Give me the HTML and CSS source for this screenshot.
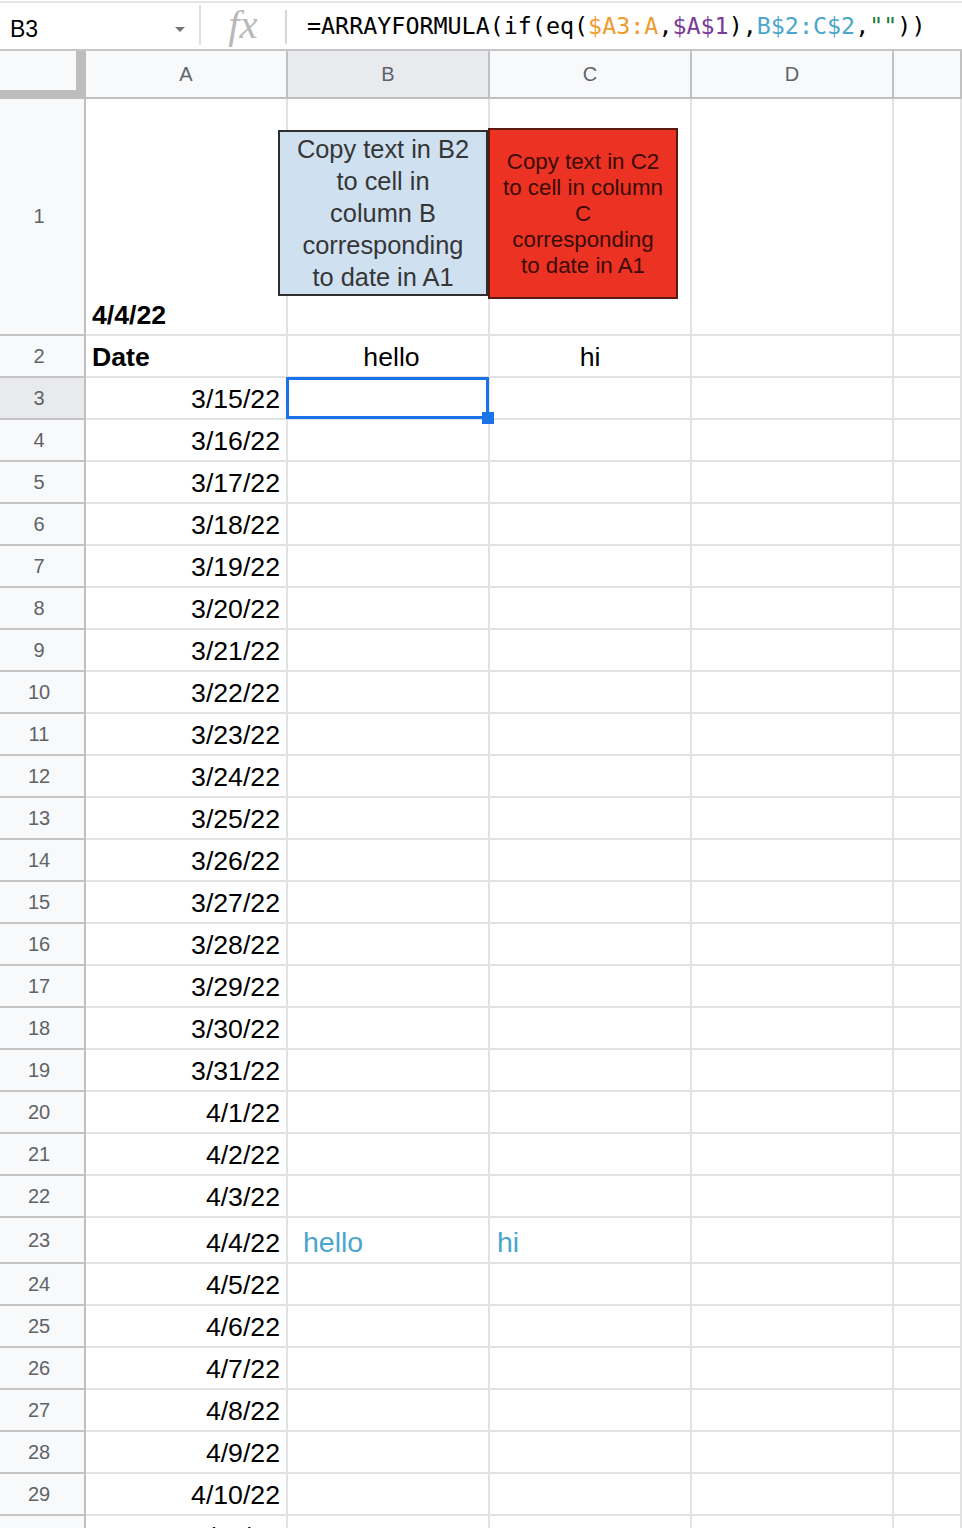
FILE: index.html
```html
<!DOCTYPE html>
<html>
<head>
<meta charset="utf-8">
<title>Sheet</title>
<link rel="stylesheet" href="styles.css">
</head>
<body>
<div class="page">
  <div class="topbar">
    <div class="namebox"><span class="ref">B3</span><span class="caret"></span></div>
    <div class="divider d1"></div>
    <div class="fx">fx</div>
    <div class="divider d2"></div>
    <div class="formula">=ARRAYFORMULA(if(eq(<span class="r1">$A3:A</span>,<span class="r2">$A$1</span>),<span class="r3">B$2:C$2</span>,<span class="str">""</span>))</div>
  </div>

  <div class="sheet">
    <div class="hrow">
      <div class="corner"><div class="corner-in"></div></div>
      <div class="ch">A</div>
      <div class="ch sel">B</div>
      <div class="ch">C</div>
      <div class="ch">D</div>
      <div class="ch"></div>
    </div>

    <div class="row r-first">
      <div class="rh">1</div><div class="c bold">4/4/22</div><div class="c"></div><div class="c"></div><div class="c"></div><div class="c"></div>
    </div>
    <div class="row">
      <div class="rh">2</div><div class="c bold">Date</div><div class="c center center-b">hello</div><div class="c center">hi</div><div class="c"></div><div class="c"></div>
    </div>
    <div class="row">
      <div class="rh sel">3</div><div class="c num">3/15/22</div><div class="c active"><div class="selbox"></div><div class="handle"></div></div><div class="c"></div><div class="c"></div><div class="c"></div>
    </div>
    <div class="row"><div class="rh">4</div><div class="c num">3/16/22</div><div class="c"></div><div class="c"></div><div class="c"></div><div class="c"></div></div>
    <div class="row"><div class="rh">5</div><div class="c num">3/17/22</div><div class="c"></div><div class="c"></div><div class="c"></div><div class="c"></div></div>
    <div class="row"><div class="rh">6</div><div class="c num">3/18/22</div><div class="c"></div><div class="c"></div><div class="c"></div><div class="c"></div></div>
    <div class="row"><div class="rh">7</div><div class="c num">3/19/22</div><div class="c"></div><div class="c"></div><div class="c"></div><div class="c"></div></div>
    <div class="row"><div class="rh">8</div><div class="c num">3/20/22</div><div class="c"></div><div class="c"></div><div class="c"></div><div class="c"></div></div>
    <div class="row"><div class="rh">9</div><div class="c num">3/21/22</div><div class="c"></div><div class="c"></div><div class="c"></div><div class="c"></div></div>
    <div class="row"><div class="rh">10</div><div class="c num">3/22/22</div><div class="c"></div><div class="c"></div><div class="c"></div><div class="c"></div></div>
    <div class="row"><div class="rh">11</div><div class="c num">3/23/22</div><div class="c"></div><div class="c"></div><div class="c"></div><div class="c"></div></div>
    <div class="row"><div class="rh">12</div><div class="c num">3/24/22</div><div class="c"></div><div class="c"></div><div class="c"></div><div class="c"></div></div>
    <div class="row"><div class="rh">13</div><div class="c num">3/25/22</div><div class="c"></div><div class="c"></div><div class="c"></div><div class="c"></div></div>
    <div class="row"><div class="rh">14</div><div class="c num">3/26/22</div><div class="c"></div><div class="c"></div><div class="c"></div><div class="c"></div></div>
    <div class="row"><div class="rh">15</div><div class="c num">3/27/22</div><div class="c"></div><div class="c"></div><div class="c"></div><div class="c"></div></div>
    <div class="row"><div class="rh">16</div><div class="c num">3/28/22</div><div class="c"></div><div class="c"></div><div class="c"></div><div class="c"></div></div>
    <div class="row"><div class="rh">17</div><div class="c num">3/29/22</div><div class="c"></div><div class="c"></div><div class="c"></div><div class="c"></div></div>
    <div class="row"><div class="rh">18</div><div class="c num">3/30/22</div><div class="c"></div><div class="c"></div><div class="c"></div><div class="c"></div></div>
    <div class="row"><div class="rh">19</div><div class="c num">3/31/22</div><div class="c"></div><div class="c"></div><div class="c"></div><div class="c"></div></div>
    <div class="row"><div class="rh">20</div><div class="c num">4/1/22</div><div class="c"></div><div class="c"></div><div class="c"></div><div class="c"></div></div>
    <div class="row"><div class="rh">21</div><div class="c num">4/2/22</div><div class="c"></div><div class="c"></div><div class="c"></div><div class="c"></div></div>
    <div class="row"><div class="rh">22</div><div class="c num">4/3/22</div><div class="c"></div><div class="c"></div><div class="c"></div><div class="c"></div></div>
    <div class="row r-tall"><div class="rh">23</div><div class="c num">4/4/22</div><div class="c hit hit-b">hello</div><div class="c hit hit-c">hi</div><div class="c"></div><div class="c"></div></div>
    <div class="row"><div class="rh">24</div><div class="c num">4/5/22</div><div class="c"></div><div class="c"></div><div class="c"></div><div class="c"></div></div>
    <div class="row"><div class="rh">25</div><div class="c num">4/6/22</div><div class="c"></div><div class="c"></div><div class="c"></div><div class="c"></div></div>
    <div class="row"><div class="rh">26</div><div class="c num">4/7/22</div><div class="c"></div><div class="c"></div><div class="c"></div><div class="c"></div></div>
    <div class="row"><div class="rh">27</div><div class="c num">4/8/22</div><div class="c"></div><div class="c"></div><div class="c"></div><div class="c"></div></div>
    <div class="row"><div class="rh">28</div><div class="c num">4/9/22</div><div class="c"></div><div class="c"></div><div class="c"></div><div class="c"></div></div>
    <div class="row"><div class="rh">29</div><div class="c num">4/10/22</div><div class="c"></div><div class="c"></div><div class="c"></div><div class="c"></div></div>
    <div class="row"><div class="rh">30</div><div class="c num">4/11/22</div><div class="c"></div><div class="c"></div><div class="c"></div><div class="c"></div></div>
  </div>

  <div class="note note-blue">Copy text in B2<br>to cell in<br>column B<br>corresponding<br>to date in A1</div>
  <div class="note note-red">Copy text in C2<br>to cell in column<br>C<br>corresponding<br>to date in A1</div>
</div>
</body>
</html>
```

FILE: styles.css
```css
* { box-sizing: border-box; }

html, body {
  margin: 0;
  padding: 0;
  background: #ffffff;
}

body {
  width: 962px;
  height: 1528px;
  overflow: hidden;
  font-family: "Liberation Sans", Arial, sans-serif;
}

.page {
  position: relative;
  width: 962px;
  height: 1528px;
  overflow: hidden;
}

/* ---------- formula bar ---------- */
.topbar {
  display: flex;
  align-items: flex-start;
  margin-top: 1px;
  height: 50px;
  border-top: 2px solid #e6e6e6;
  border-bottom: 2px solid #c6c6c6;
  background: #fff;
}

.namebox {
  width: 199px;
  height: 46px;
  display: flex;
  justify-content: space-between;
  align-items: flex-start;
  padding: 6px 14px 0 10px;
  font-size: 23px;
  line-height: 40px;
  color: #000;
}

.caret {
  width: 0;
  height: 0;
  margin-top: 18px;
  border-left: 5px solid transparent;
  border-right: 5px solid transparent;
  border-top: 5px solid #757575;
}

.divider {
  width: 2px;
  background: #e0e0e0;
}
.d1 { height: 40px; margin-top: 2px; }
.d2 { height: 34px; margin-top: 7px; background: #d6d6d6; }

.fx {
  width: 84px;
  padding-top: 1px;
  text-align: center;
  font-family: "Liberation Serif", "Times New Roman", serif;
  font-style: italic;
  font-size: 41px;
  line-height: 40px;
  color: #b9b9b9;
}

.formula {
  padding: 1px 0 0 20px;
  font-family: "DejaVu Sans Mono", "Liberation Mono", monospace;
  font-size: 23.35px;
  line-height: 45px;
  color: #000;
  white-space: nowrap;
}
.r1 { color: #f09a30; }
.r2 { color: #7b3a96; }
.r3 { color: #4aa6cc; }
.str { color: #188038; }

/* ---------- grid ---------- */
.hrow,
.row {
  display: grid;
  grid-template-columns: 86px 202px 202px 202px 202px 68px;
}

.hrow { height: 48px; }

.corner {
  position: relative;
  background: #bdbdbd;
}
.corner-in {
  width: 76px;
  height: 39px;
  background: #f8f9fa;
}

.ch {
  background: #f8f9fa;
  border-right: 2px solid #c0c0c0;
  border-bottom: 2px solid #c0c0c0;
  display: flex;
  align-items: center;
  justify-content: center;
  font-size: 20px;
  color: #5f6368;
}
.ch.sel { background: #e8eaed; }

.row { height: 42px; }
.row.r-first { height: 237px; }
.row.r-tall { height: 46px; }

.rh {
  background: #f8f9fa;
  border-right: 2px solid #c0c0c0;
  border-bottom: 2px solid #c4c4c4;
  display: flex;
  align-items: center;
  justify-content: center;
  padding-right: 6px;
  font-size: 20px;
  color: #5f6368;
}
.rh.sel { background: #e8eaed; }

.c {
  border-right: 2px solid #e2e2e2;
  border-bottom: 2px solid #e2e2e2;
  display: flex;
  align-items: flex-end;
  padding: 0 6px 4px 6px;
  font-size: 26.67px;
  line-height: 30px;
  color: #000;
  white-space: nowrap;
  overflow: hidden;
}
.c.num { justify-content: flex-end; }
.c.center { justify-content: center; }
.c.center-b { padding-left: 13px; }
.c.bold { font-weight: bold; }

.c.hit {
  font-size: 28.5px;
  color: #4aa6cc;
  padding-bottom: 5px;
}
.c.hit-b { padding-left: 15px; }
.c.hit-c { padding-left: 7px; }

.c.active {
  position: relative;
  overflow: visible;
}
.selbox {
  position: absolute;
  left: -2px;
  top: -1px;
  width: 203px;
  height: 42px;
  border: 3px solid #1a73e8;
  z-index: 2;
}
.handle {
  position: absolute;
  left: 194px;
  top: 34px;
  width: 12px;
  height: 12px;
  background: #1a73e8;
  z-index: 3;
}

/* ---------- floating drawings ---------- */
.note {
  position: absolute;
  display: flex;
  align-items: center;
  justify-content: center;
  text-align: center;
  font-family: "Liberation Sans", Arial, sans-serif;
  z-index: 4;
}
.note-blue {
  left: 278px;
  top: 130px;
  width: 210px;
  height: 166px;
  background: #cfe0f1;
  border: 2px solid #2e2e2e;
  font-size: 25.4px;
  line-height: 32px;
  color: #363636;
}
.note-red {
  left: 488px;
  top: 128px;
  width: 190px;
  height: 171px;
  background: #ec3223;
  border: 2px solid #5a1a12;
  font-size: 22.3px;
  line-height: 26px;
  color: #3a0c06;
}
```
